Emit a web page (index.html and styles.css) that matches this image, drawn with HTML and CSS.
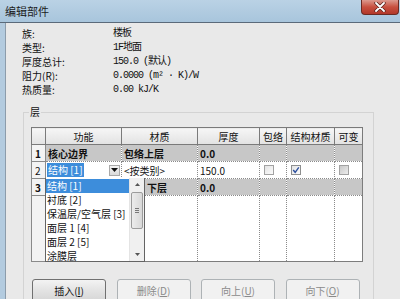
FILE: index.html
```html
<!DOCTYPE html>
<html lang="zh-CN">
<head>
    <meta charset="UTF-8">
    <title>编辑部件</title>
    <link rel="stylesheet" href="styles.css">
</head>
<body>
    <div class="titlebar">
        <span class="title">编辑部件</span>
        <span class="close">
            <svg width="12" height="10" viewBox="0 0 12 10">
                <path d="M2 1 L10 9 M10 1 L2 9" stroke="#5a2620" stroke-width="3.4" stroke-linecap="round"/>
                <path d="M2 1 L10 9 M10 1 L2 9" stroke="#fff" stroke-width="1.8" stroke-linecap="round"/>
            </svg>
        </span>
    </div>

    <div class="frame">
        <div class="frame-edge"></div>
        <div class="client">
            <div class="props">
                <span>族:</span><span class="val">楼板</span>
                <span>类型:</span><span class="val">1F地面</span>
                <span>厚度总计:</span><span class="val">150.0 (默认)</span>
                <span>阻力(R):</span><span class="val">0.0000 (m² · K)/W</span>
                <span>热质量:</span><span class="val">0.00 kJ/K</span>
            </div>

            <fieldset class="layers">
                <legend>层</legend>
                <div class="grid-wrap">
                    <table class="grid">
                        <colgroup>
                            <col style="width:14px">
                            <col style="width:76px">
                            <col style="width:76px">
                            <col style="width:62px">
                            <col style="width:27px">
                            <col style="width:48px">
                            <col style="width:28px">
                        </colgroup>
                        <thead>
                            <tr>
                                <th></th>
                                <th>功能</th>
                                <th>材质</th>
                                <th>厚度</th>
                                <th>包络</th>
                                <th>结构材质</th>
                                <th>可变</th>
                            </tr>
                        </thead>
                        <tbody>
                            <tr class="core">
                                <td class="num">1</td>
                                <td>核心边界</td>
                                <td>包络上层</td>
                                <td>0.0</td>
                                <td></td>
                                <td></td>
                                <td></td>
                            </tr>
                            <tr>
                                <td class="num">2</td>
                                <td class="editing">
                                    <div class="combo">
                                        <span class="sel">结构 [1]</span>
                                        <span class="drop-btn">
                                            <svg width="7" height="4" viewBox="0 0 7 4"><path d="M0 0 H7 L3.5 4 Z" fill="#111"/></svg>
                                        </span>
                                    </div>
                                </td>
                                <td>&lt;按类别&gt;</td>
                                <td>150.0</td>
                                <td><span class="check"></span></td>
                                <td>
                                    <span class="check on">
                                        <svg width="8" height="8" viewBox="0 0 8 8"><path d="M1.2 4 L3.2 6.3 L6.8 1.4" fill="none" stroke="#2b4f9e" stroke-width="1.4"/></svg>
                                    </span>
                                </td>
                                <td><span class="check off"></span></td>
                            </tr>
                            <tr class="core">
                                <td class="num">3</td>
                                <td></td>
                                <td class="tail">下层</td>
                                <td>0.0</td>
                                <td></td>
                                <td></td>
                                <td></td>
                            </tr>
                            <tr class="filler">
                                <td class="num"></td>
                                <td></td>
                                <td></td>
                                <td></td>
                                <td></td>
                                <td></td>
                                <td></td>
                            </tr>
                        </tbody>
                    </table>

                    <div class="droplist">
                        <ul class="options">
                            <li class="active">结构 [1]</li>
                            <li>衬底 [2]</li>
                            <li>保温层/空气层 [3]</li>
                            <li>面层 1 [4]</li>
                            <li>面层 2 [5]</li>
                            <li>涂膜层</li>
                        </ul>
                        <div class="scrollbar">
                            <span class="arrow">
                                <svg width="5" height="3" viewBox="0 0 5 3"><path d="M0 3 H5 L2.5 0 Z" fill="#555"/></svg>
                            </span>
                            <span class="thumb"><i></i><i></i><i></i></span>
                            <span class="spacer"></span>
                            <span class="arrow">
                                <svg width="5" height="3" viewBox="0 0 5 3"><path d="M0 0 H5 L2.5 3 Z" fill="#555"/></svg>
                            </span>
                        </div>
                    </div>
                </div>

                <div class="buttons">
                    <button>插入(<u>I</u>)</button>
                    <button disabled>删除(<u>D</u>)</button>
                    <button disabled>向上(<u>U</u>)</button>
                    <button disabled>向下(<u>O</u>)</button>
                </div>
            </fieldset>
        </div>
    </div>
</body>
</html>
```

FILE: styles.css
```css
* {
    box-sizing: border-box;
}
body {
    margin: 0;
    width: 400px;
    height: 299px;
    overflow: hidden;
    background-color: #e9e9e9;
    font-family: "Noto Sans CJK SC", sans-serif;
    font-size: 10px;
    color: #111;
}

/* window frame */
.titlebar {
    height: 23px;
    display: flex;
    justify-content: space-between;
    align-items: flex-start;
    background: linear-gradient(to bottom, #bad2e5, #a8c5dc);
    border-bottom: 1px solid #5b6a7a;
}
.title {
    padding: 4px 0 0 5px;
    font-size: 11px;
    line-height: 14px;
    color: #1c1c1c;
}
.close {
    width: 38px;
    height: 15px;
    margin-right: 1px;
    display: flex;
    align-items: center;
    justify-content: center;
    background: linear-gradient(to bottom, #dc9a8e, #c8503f 50%, #b2382a);
    border: 1px solid #6b2b23;
    border-top: none;
    border-radius: 0 0 4px 4px;
}
.frame {
    display: flex;
    height: 276px;
}
.frame-edge {
    width: 6px;
    background-color: #b3cbdf;
    border-right: 1px solid #8c9cab;
}
.client {
    flex: 1;
}

/* properties */
.props {
    display: grid;
    grid-template-columns: 91px auto;
    padding: 4px 0 0 16px;
    line-height: 14px;
}
.val {
    font-family: "Liberation Mono", "Noto Sans CJK SC", monospace;
    letter-spacing: -1px;
}

/* layers group */
.layers {
    width: 351px;
    margin: 9px 0 0 17px;
    padding: 9px 10px 0 7px;
    border: 1px solid #d3d3d3;
    min-width: 0;
}
.layers legend {
    margin-left: -2px;
    padding: 0 1px;
    line-height: 12px;
}
.grid-wrap {
    position: relative;
}
.grid {
    width: 331px;
    table-layout: fixed;
    border-collapse: collapse;
    border: 1px solid #7d7d7d;
    background-color: #fff;
}
.grid th,
.grid td {
    height: 17px;
    padding: 0 2px;
    line-height: 15px;
    white-space: nowrap;
    overflow: hidden;
    text-align: left;
    border: 1px dotted #8a8a8a;
}
.grid th {
    font-weight: normal;
    text-align: center;
    background: linear-gradient(to bottom, #f6f6f6, #e2e2e2);
    border: 1px solid #7a7a7a;
}
.grid td.num {
    padding-left: 3px;
    background-color: #f3f3f3;
    border: 1px solid #8a8a8a;
}
.grid td.tail {
    padding-left: 25px;
}
.core td {
    font-weight: bold;
    background-color: #c7c7c7;
}
.filler td {
    height: 66px;
}
.editing {
    padding: 0 1px !important;
}
.combo {
    display: flex;
    align-items: center;
}
.sel {
    padding: 0 1px;
    background-color: #3d8ddb;
    color: #fff;
    line-height: 14px;
}
.drop-btn {
    margin-left: auto;
    width: 11px;
    height: 11px;
    display: flex;
    align-items: center;
    justify-content: center;
    background: linear-gradient(to bottom, #f4f4f4, #dadada);
    border: 1px solid #a9a9a9;
}
.check {
    display: block;
    width: 10px;
    height: 10px;
    margin-left: 2px;
    border: 1px solid #a2a2a2;
    background: linear-gradient(135deg, #e4e4e4, #fbfbfb);
}
.check.on {
    display: flex;
    align-items: center;
    justify-content: center;
    border-color: #8e8f8f;
}
.check.off {
    background: linear-gradient(135deg, #c9c9c9, #ececec);
}

/* open dropdown */
.droplist {
    position: absolute;
    left: 14px;
    top: 51px;
    width: 100px;
    height: 84px;
    display: flex;
    background-color: #fff;
    border: 1px solid #646464;
    border-top: none;
}
.options {
    flex: 1;
    margin: 0;
    padding: 1px 0 0;
    list-style: none;
}
.options li {
    height: 14px;
    line-height: 14px;
    padding-left: 1px;
    white-space: nowrap;
}
.options li.active {
    background-color: #3d8ddb;
    color: #fff;
}
.scrollbar {
    width: 15px;
    display: flex;
    flex-direction: column;
    align-items: center;
    background-color: #f0f0f0;
    border-left: 1px solid #e4e4e4;
}
.arrow {
    height: 13px;
    display: flex;
    align-items: center;
}
.thumb {
    width: 12px;
    height: 37px;
    margin-top: 1px;
    display: flex;
    flex-direction: column;
    align-items: center;
    justify-content: center;
    gap: 1px;
    border: 1px solid #9c9c9c;
    border-radius: 2px;
    background: linear-gradient(to right, #ececec, #d8d8d8);
}
.thumb i {
    width: 4px;
    height: 1px;
    background-color: #777;
}
.spacer {
    flex: 1;
}

/* buttons */
.buttons {
    display: flex;
    gap: 10.5px;
    margin-top: 17px;
    padding-left: 1px;
}
button {
    width: 74px;
    height: 23px;
    padding: 0;
    font-family: "Noto Sans CJK SC", sans-serif;
    font-size: 10px;
    color: #111;
    background: linear-gradient(to bottom, #f3f3f3, #e3e3e3 50%, #d6d6d6);
    border: 1px solid #707070;
    border-radius: 3px;
}
button:disabled {
    color: #8a8a8a;
    background: #f1f1f1;
    border-color: #adb2b5;
}
```
